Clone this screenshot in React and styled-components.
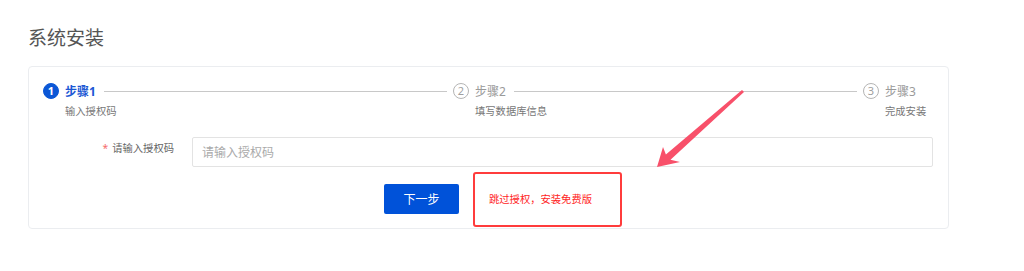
import styled, { createGlobalStyle } from "styled-components";

const GlobalStyle = createGlobalStyle`
  body {
    margin: 0;
    background: #fff;
    font-family: "Noto Sans", "Noto Sans CJK SC", sans-serif;
  }
`;

const steps = [
  { num: 1, title: "步骤1", desc: "输入授权码" },
  { num: 2, title: "步骤2", desc: "填写数据库信息" },
  { num: 3, title: "步骤3", desc: "完成安装" },
];

const Page = styled.div`
  position: relative;
  width: 1024px;
  height: 271px;
  padding: 25px 75px 0 28px;
  box-sizing: border-box;
`;

const Title = styled.h2`
  margin: 0 0 15px;
  font-size: 19px;
  line-height: 26px;
  font-weight: normal;
  color: #555;
`;

const Card = styled.div`
  border: 1px solid #ebedf0;
  border-radius: 4px;
  padding: 16px 15px 14px 14px;
`;

const Steps = styled.div`
  display: flex;
`;

const Step = styled.div`
  flex: ${({ $last }) => ($last ? "0 0 70px" : "1 1 0")};
  min-width: 0;
`;

const StepHead = styled.div`
  display: flex;
  align-items: center;
  height: 16px;
`;

const StepIcon = styled.span`
  flex: none;
  width: 14px;
  height: 14px;
  border-radius: 50%;
  box-sizing: content-box;
  border: 1px solid ${({ $active }) => ($active ? "#0b57d6" : "#b5b5b5")};
  background: ${({ $active }) => ($active ? "#0b57d6" : "#fff")};
  color: ${({ $active }) => ($active ? "#fff" : "#a0a0a0")};
  font-size: 11px;
  font-weight: ${({ $active }) => ($active ? "bold" : "normal")};
  line-height: 14px;
  text-align: center;
`;

const StepTitle = styled.span`
  margin-left: 6px;
  font-size: 12px;
  color: ${({ $active }) => ($active ? "#1c58d4" : "#9a9a9a")};
  font-weight: ${({ $active }) => ($active ? "bold" : "normal")};
  white-space: nowrap;
`;

const StepLine = styled.span`
  flex: 1;
  height: 1px;
  background: #c8c8c8;
  margin: 0 6px 0 8px;
`;

const StepDesc = styled.div`
  margin: 4px 0 0 22px;
  font-size: 10.3px;
  line-height: 16px;
  color: #777;
  white-space: nowrap;
`;

const FormRow = styled.div`
  display: flex;
  margin-top: 18px;
`;

const Label = styled.label`
  width: 131px;
  padding-right: 18px;
  text-align: right;
  font-size: 10.3px;
  line-height: 22px;
  color: #666;
  flex: none;

  &::before {
    content: "*";
    color: #f56c6c;
    margin-right: 4px;
  }
`;

const Input = styled.input`
  flex: 1;
  height: 30px;
  box-sizing: border-box;
  border: 1px solid #e3e3e3;
  border-radius: 2px;
  padding: 0 9px;
  font-family: inherit;
  font-size: 12px;
  outline: none;

  &::placeholder {
    color: #aaa;
  }
`;

const Actions = styled.div`
  display: flex;
  justify-content: center;
  align-items: center;
  gap: 30px;
  margin-top: 17px;
`;

const Button = styled.button`
  width: 75px;
  height: 30px;
  border: none;
  border-radius: 2px;
  background: #0052d9;
  color: #fff;
  font-family: inherit;
  font-size: 12px;
  cursor: pointer;
`;

const SkipLink = styled.a`
  position: relative;
  display: inline-block;
  font-size: 10.3px;
  line-height: 16px;
  color: #ff2626;
  cursor: pointer;

  &::after {
    content: "";
    position: absolute;
    left: -16px;
    right: -30px;
    top: -19px;
    bottom: -20px;
    border: 2px solid #ff3c3c;
    border-radius: 3px;
  }
`;

const Arrow = styled.svg`
  position: absolute;
  left: 0;
  top: 0;
  pointer-events: none;
`;

const App = () => {
  return (
    <>
      <GlobalStyle />
      <Page>
        <Title>系统安装</Title>
        <Card>
          <Steps>
            {steps.map((s, i) => {
              const active = i === 0;
              const last = i === steps.length - 1;
              return (
                <Step key={s.num} $last={last}>
                  <StepHead>
                    <StepIcon $active={active}>{s.num}</StepIcon>
                    <StepTitle $active={active}>{s.title}</StepTitle>
                    {!last && <StepLine />}
                  </StepHead>
                  <StepDesc>{s.desc}</StepDesc>
                </Step>
              );
            })}
          </Steps>
          <FormRow>
            <Label>请输入授权码</Label>
            <Input placeholder="请输入授权码" />
          </FormRow>
          <Actions>
            <Button type="button">下一步</Button>
            <SkipLink>跳过授权，安装免费版</SkipLink>
          </Actions>
        </Card>
        <Arrow width="1024" height="271" viewBox="0 0 1024 271">
          <polygon
            points="742,90 744,92 670.5,159.7 680,162 657,167 663,147 665.9,154.5"
            fill="#f8506a"
          />
        </Arrow>
      </Page>
    </>
  );
};

export default App;
